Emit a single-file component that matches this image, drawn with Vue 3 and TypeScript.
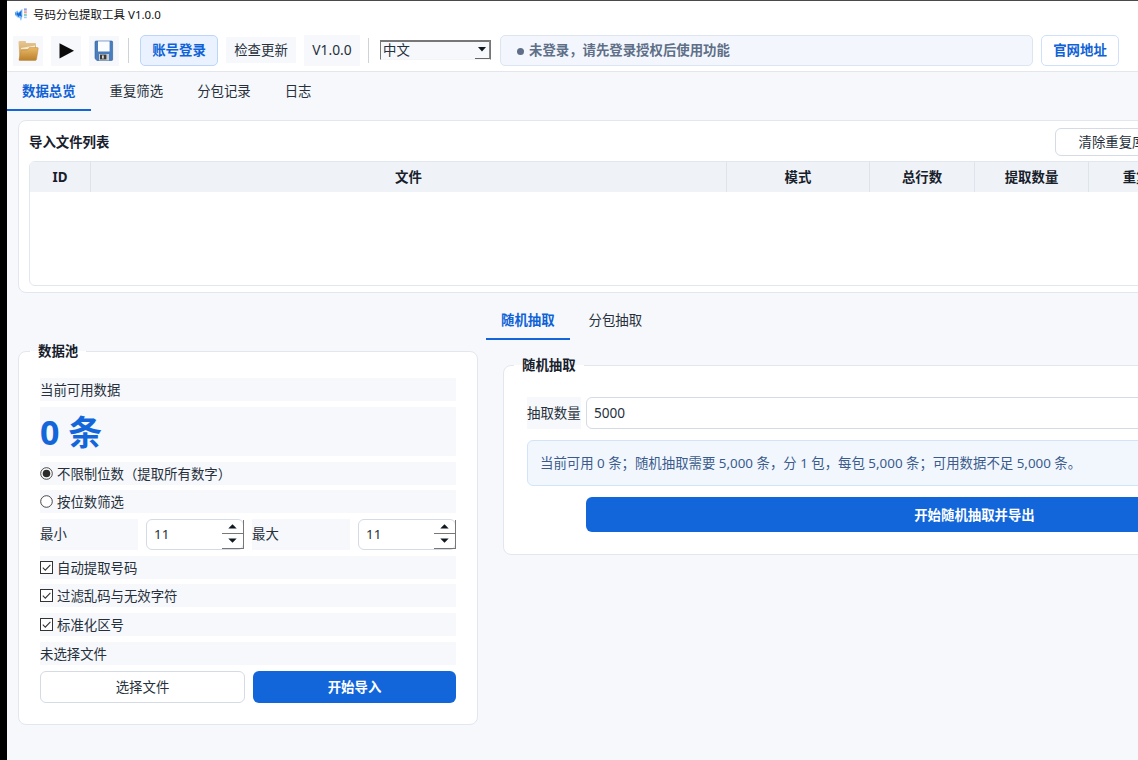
<script setup lang="ts">
import { ref } from 'vue'

const mainTabs = ['数据总览', '重复筛选', '分包记录', '日志']
const drawTabs = ['随机抽取', '分包抽取']
const activeMain = ref(0)
const activeDraw = ref(0)
const columns = ['ID', '文件', '模式', '总行数', '提取数量', '重复数量']
const lengthMode = ref(0)
const lengthModes = ['不限制位数（提取所有数字）', '按位数筛选']
const options = ref([
  { label: '自动提取号码', on: true },
  { label: '过滤乱码与无效字符', on: true },
  { label: '标准化区号', on: true },
])
const limits = [
  { label: '最小', value: 11 },
  { label: '最大', value: 11 },
]
</script>

<template>
  <div class="screen">
    <div class="window">
      <header class="titlebar">
        <svg class="logo" width="14" height="14" viewBox="0 0 14 14">
          <path d="M0.8 4.2 L3.6 2.6 L4.6 4.2 L8.4 0.8 L8.4 8.4 L7 13 L5.6 10 L3.6 9.6 L1.4 7.6 Z" fill="#86c3f8" />
          <path d="M3 4 L4.4 5.6 L7.6 2.4 L7.2 5.6 L7.8 9 L5.6 7.6 L4.6 9 L3 6.8 Z" fill="#1769d8" />
          <path d="M1.2 4.6 L2.6 5 L2.6 7.6 L1.4 7 Z" fill="#2f86e8" />
          <rect x="10" y="0.4" width="2.8" height="2.2" fill="#8f9fe4" />
          <rect x="10" y="3.2" width="2.8" height="2.2" fill="#e9a28f" />
          <rect x="10" y="6" width="2.8" height="2" fill="#86cfc4" />
          <rect x="10" y="8.6" width="2.8" height="1.6" fill="#a9c8f7" />
        </svg>
        <span>号码分包提取工具 V1.0.0</span>
      </header>

      <div class="toolbar">
        <button class="tool">
          <svg width="22" height="22" viewBox="0 0 22 22">
            <defs>
              <linearGradient id="folderFront" x1="0" y1="0" x2="0" y2="1">
                <stop offset="0" stop-color="#eab968" />
                <stop offset="1" stop-color="#b9802c" />
              </linearGradient>
              <linearGradient id="folderBack" x1="0" y1="0" x2="0" y2="1">
                <stop offset="0" stop-color="#e7c793" />
                <stop offset="1" stop-color="#c99a52" />
              </linearGradient>
            </defs>
            <path d="M1.5 2 Q1.5 1 2.5 1 H8 Q9 1 9 2 V3 H18 Q19 3 19 4 V19 H2.5 Z" fill="url(#folderBack)" />
            <path d="M4 8 L18 5.6 V9 H4 Z" fill="#f7ead0" />
            <path d="M4.2 10.4 L10.5 10 L12.5 7.6 H20.5 Q21.4 7.6 21.2 8.6 L19.6 19 Q19.4 20.5 18 20.5 H2.6 Q1.8 20.5 2 19.5 Z" fill="url(#folderFront)" stroke="#c08b3c" stroke-width=".5" />
          </svg>
        </button>
        <button class="tool">
          <svg width="22" height="22" viewBox="0 0 22 22"><path d="M4.5 3.2 L19 10.8 L4.5 18.6 Z" fill="#0b0b0b" /></svg>
        </button>
        <button class="tool">
          <svg width="22" height="22" viewBox="0 0 22 22">
            <path d="M3 1 H18.6 Q19.6 1 19.6 2 V19.5 Q19.6 20.5 18.6 20.5 H4 L2 18.6 V2 Q2 1 3 1 Z" fill="#4a7dbd" stroke="#2d5c98" stroke-width=".6" />
            <rect x="5" y="1.3" width="11.6" height="10.2" fill="#fbfcfe" />
            <rect x="6" y="14" width="10" height="6.4" fill="#c9ccd0" />
            <rect x="7" y="14.6" width="6.4" height="4.8" fill="#3a3a38" />
            <rect x="9" y="15.4" width="1.8" height="3.2" fill="#d5d5d2" />
          </svg>
        </button>
        <i class="sep"></i>
        <button class="btn login">账号登录</button>
        <button class="btn flat">检查更新</button>
        <button class="btn version">V1.0.0</button>
        <i class="sep second"></i>
        <div class="combo">
          <span>中文</span>
          <span class="drop"><svg width="8" height="5" viewBox="0 0 8 5"><path d="M0 0 H8 L4 4.4 Z" fill="#101820" /></svg></span>
        </div>
        <div class="status"><i class="dot"></i>未登录，请先登录授权后使用功能</div>
        <button class="btn site">官网地址</button>
      </div>

      <nav class="tabs">
        <button v-for="(t, i) in mainTabs" :key="t" class="tab" :class="{ active: i === activeMain }" @click="activeMain = i">{{ t }}</button>
      </nav>

      <section class="files">
        <div class="files-head">
          <h2>导入文件列表</h2>
          <button class="clear">清除重复库</button>
        </div>
        <div class="table">
          <div class="thead">
            <div v-for="c in columns" :key="c" class="th">{{ c }}</div>
          </div>
        </div>
      </section>

      <main class="panels">
        <section class="group pool">
          <h3 class="legend">数据池</h3>
          <div class="line">当前可用数据</div>
          <div class="total">0 条</div>
          <label v-for="(m, i) in lengthModes" :key="m" class="line" @click="lengthMode = i">
            <svg width="13" height="13" viewBox="0 0 13 13">
              <circle cx="6.5" cy="6.5" r="5.8" fill="#fff" stroke="#333" stroke-width=".9" />
              <circle v-if="lengthMode === i" cx="6.5" cy="6.5" r="3.8" fill="#2b2b2b" />
            </svg>
            {{ m }}
          </label>
          <div class="limits">
            <template v-for="l in limits" :key="l.label">
              <span class="limit-label">{{ l.label }}</span>
              <div class="spin">
                <span>{{ l.value }}</span>
                <div class="arrows">
                  <i><svg width="9" height="5" viewBox="0 0 9 5"><path d="M0.3 4.6 L4.5 0.2 L8.7 4.6 Z" fill="#101820" /></svg></i>
                  <i><svg width="9" height="5" viewBox="0 0 9 5"><path d="M0.3 0.4 L4.5 4.8 L8.7 0.4 Z" fill="#101820" /></svg></i>
                </div>
              </div>
            </template>
          </div>
          <label v-for="o in options" :key="o.label" class="line" @click="o.on = !o.on">
            <svg width="13" height="13" viewBox="0 0 13 13">
              <rect x=".5" y=".5" width="12" height="12" fill="#fff" stroke="#333" />
              <path v-if="o.on" d="M2.8 6.6 L5.3 9.1 L10.4 3.8" fill="none" stroke="#333" stroke-width="1.1" />
            </svg>
            {{ o.label }}
          </label>
          <div class="line chosen">未选择文件</div>
          <div class="actions">
            <button class="pick">选择文件</button>
            <button class="primary">开始导入</button>
          </div>
        </section>

        <div class="draw">
          <nav class="tabs">
            <button v-for="(t, i) in drawTabs" :key="t" class="tab" :class="{ active: i === activeDraw }" @click="activeDraw = i">{{ t }}</button>
          </nav>
          <section class="group random">
            <h3 class="legend">随机抽取</h3>
            <div class="amount">
              <span class="amount-label">抽取数量</span>
              <div class="input">5000</div>
            </div>
            <div class="info">当前可用 0 条；随机抽取需要 5,000 条，分 1 包，每包 5,000 条；可用数据不足 5,000 条。</div>
            <button class="primary export">开始随机抽取并导出</button>
          </section>
        </div>
      </main>
    </div>
  </div>
</template>

<style>
body {
  margin: 0;
  overflow: hidden;
}
</style>

<style scoped>
* {
  box-sizing: border-box;
}
.screen {
  width: 1138px;
  height: 760px;
  overflow: hidden;
  background: #000;
  padding-left: 7px;
  font-family: "Noto Sans", "Noto Sans CJK SC", sans-serif;
  font-size: 13.4px;
  line-height: 20px;
  color: #26303b;
}
.window {
  width: 1391px;
  height: 760px;
  background: #f6f8fc;
  border-top: 1px solid #4a4a4a;
}
button {
  font: inherit;
  color: inherit;
  border: 0;
  padding: 0;
  margin: 0;
  background: none;
  white-space: nowrap;
}
.titlebar {
  height: 29px;
  background: #fff;
  display: flex;
  align-items: center;
  gap: 5px;
  padding: 0 0 2px 7px;
  font-size: 11.5px;
  color: #111;
}
.toolbar {
  height: 42px;
  background: #fff;
  border-bottom: 1px solid #e3e7ec;
  display: flex;
  align-items: center;
  padding-left: 6px;
}
.tool {
  width: 30px;
  height: 30px;
  margin-right: 8px;
  background: #f6f8fc;
  display: flex;
  align-items: center;
  justify-content: center;
}
.sep {
  width: 1px;
  height: 25px;
  margin: 0 11px 0 1px;
  background: #cfd2d6;
}
.sep.second {
  margin: 0 11px 0 8px;
}
.btn {
  height: 31px;
  padding-bottom: 1px;
}
.login {
  width: 78px;
  margin-right: 8px;
  border: 1px solid #bcd6fb;
  border-radius: 5px;
  background: #eaf2ff;
  color: #0f62d6;
  font-weight: 700;
}
.flat {
  width: 70px;
  height: 26px;
  margin: 0 8px 1px 0;
  background: #f6f8fc;
}
.version {
  width: 56px;
  background: #f6f8fc;
  font-size: 13.8px;
}
.combo {
  width: 111px;
  height: 20px;
  margin: 0 9px 2px 0;
  background: #f6f8fc;
  border: 1px solid #777;
  border-top-width: 2px;
  border-bottom-color: #f3f4f6;
  padding-left: 2px;
  display: flex;
  align-items: center;
  justify-content: space-between;
}
.drop {
  width: 15px;
  height: 18px;
  border-bottom: 1px solid #666;
  border-right: 1px solid #888;
  display: flex;
  align-items: center;
  justify-content: center;
}
.status {
  width: 533px;
  height: 31px;
  margin-right: 8px;
  padding: 0 0 1px 16px;
  border: 1px solid #dde5f0;
  border-radius: 5px;
  background: #f3f7fd;
  color: #5f6f88;
  font-weight: 700;
  display: flex;
  align-items: center;
}
.dot {
  width: 7px;
  height: 7px;
  margin: 2px 5px 0 0;
  border-radius: 50%;
  background: #5f6f88;
}
.site {
  width: 78px;
  border: 1px solid #cfe0fa;
  border-radius: 5px;
  background: #fff;
  color: #0f62d6;
  font-weight: 700;
}
.tabs {
  height: 39px;
  display: flex;
  gap: 4px;
}
.tab {
  padding: 0 15px;
  border-bottom: 2px solid transparent;
}
.tab.active {
  color: #0f62d6;
  border-color: #1266da;
  font-weight: 700;
}
.files {
  height: 173px;
  margin: 9px 0 0 11px;
  padding: 7px 0 0 10px;
  background: #fff;
  border: 1px solid #e2e7ef;
  border-radius: 8px;
}
.files-head {
  display: flex;
  align-items: center;
  justify-content: space-between;
  height: 28px;
}
.files-head h2,
.legend {
  margin: 0;
  font-size: inherit;
  font-weight: 700;
  color: #17202b;
}
.clear {
  width: 114px;
  height: 28px;
  margin-right: 228px;
  border: 1px solid #d4dbe5;
  border-radius: 6px;
}
.table {
  height: 125px;
  margin-top: 5px;
  border: 1px solid #e2e7ef;
  border-radius: 6px;
  overflow: hidden;
}
.thead {
  display: grid;
  grid-template-columns: 61px 636px 143px 105px 114px 122px;
  height: 30px;
  background: #eff3f8;
}
.th {
  display: flex;
  align-items: center;
  justify-content: center;
  border-right: 1px solid #dfe4ea;
  font-weight: 700;
  color: #17202b;
}
.panels {
  display: flex;
  align-items: flex-start;
}
.group {
  position: relative;
  background: #fff;
  border: 1px solid #e2e7ef;
  border-radius: 8px;
}
.legend {
  position: absolute;
  left: 11px;
  top: -11px;
  padding: 0 8px;
  background: linear-gradient(#f6f8fc 10px, #fff 10px);
}
.random .legend {
  left: 10px;
}
.pool {
  width: 460px;
  height: 374px;
  margin: 58px 8px 0 11px;
  padding: 26px 21px 0 21px;
}
.line {
  height: 23px;
  margin-bottom: 5.5px;
  background: #f6f8fc;
  display: flex;
  align-items: center;
  padding-top: 1px;
}
.line svg {
  margin: -1px 4px 0 0;
}
.total {
  height: 49px;
  margin-bottom: 6px;
  background: #f6f8fc;
  color: #1266da;
  font-size: 34px;
  font-weight: 700;
  line-height: 50px;
}
.limits {
  height: 31px;
  margin-bottom: 6px;
  display: flex;
  justify-content: space-between;
}
.limit-label {
  width: 98px;
  background: #f6f8fc;
  line-height: 31px;
}
.spin {
  width: 98px;
  border: 1px solid #d4dbe5;
  border-radius: 6px;
  background: #fff;
  display: flex;
  justify-content: space-between;
  line-height: 29px;
  padding-left: 7px;
}
.arrows {
  width: 22px;
  height: 29px;
  margin-right: -1px;
  display: flex;
  flex-direction: column;
}
.arrows i {
  height: 14px;
  border-right: 1px solid #777;
  border-bottom: 1px solid #777;
  display: flex;
  align-items: center;
  justify-content: center;
}
.arrows i + i {
  height: 15px;
}
.chosen {
  margin: 6px 0;
}
.actions {
  display: grid;
  grid-template-columns: 205px 203px;
  gap: 8px;
  height: 32px;
}
.pick {
  border: 1px solid #d4dbe5;
  border-radius: 6px;
  background: #fff;
}
.primary {
  border-radius: 6px;
  background: #1266da;
  color: #fff;
  font-weight: 700;
}
.draw {
  flex: 1;
  padding-top: 8px;
}
.random {
  height: 190px;
  margin: 25px 11px 0 17px;
  padding: 31px 23px 0;
}
.amount {
  display: flex;
  height: 32px;
  gap: 5px;
}
.amount-label {
  width: 54px;
  background: #f6f8fc;
  line-height: 32px;
  white-space: nowrap;
}
.input {
  flex: 1;
  border: 1px solid #d4dbe5;
  border-radius: 6px;
  padding-left: 7px;
  font-size: 13.6px;
  line-height: 29px;
}
.info {
  height: 46px;
  margin: 11px 0;
  padding-left: 12px;
  border: 1px solid #d3e3fb;
  border-radius: 6px;
  background: #f2f7fe;
  color: #3a5b8c;
  line-height: 45px;
}
.export {
  display: block;
  width: 777px;
  height: 35px;
  margin-left: 59px;
}
</style>
